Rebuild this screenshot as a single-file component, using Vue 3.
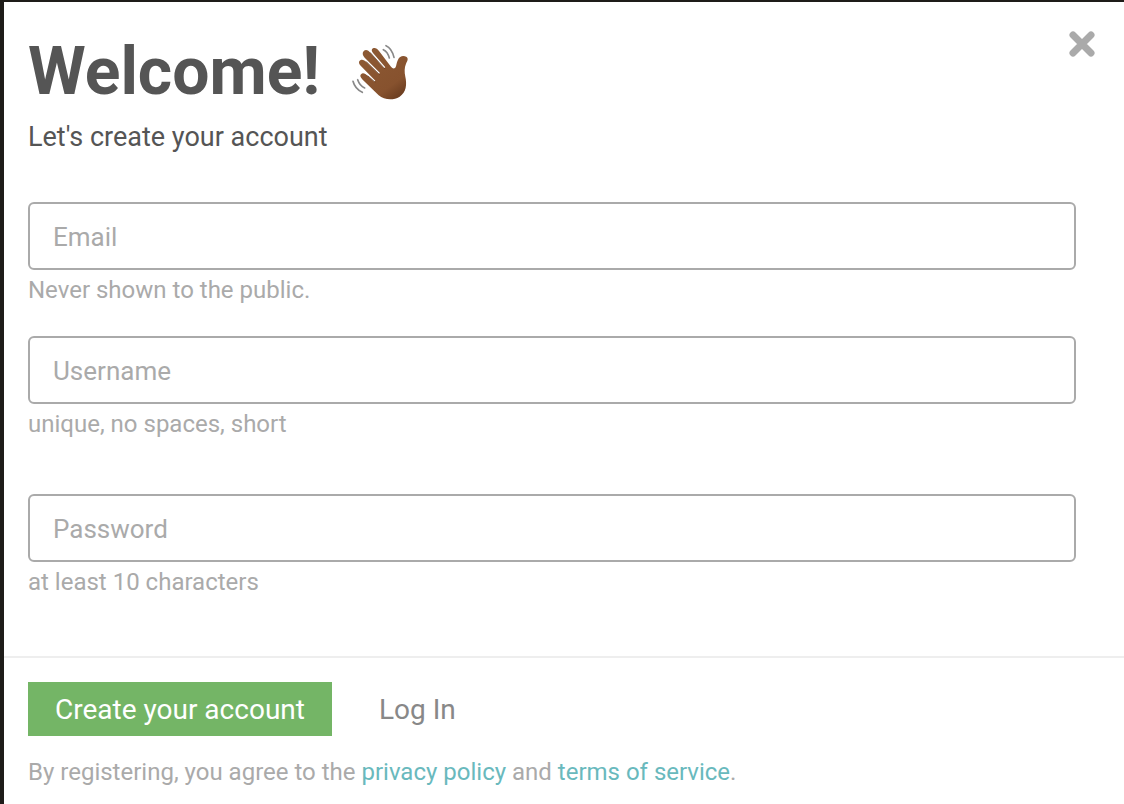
<script setup>
import { reactive, ref } from "vue"

const open = ref(true)

const form = reactive({
  email: "",
  username: "",
  password: ""
})

const fields = [
  { name: "email", type: "email", label: "Email", hint: "Never shown to the public." },
  { name: "username", type: "text", label: "Username", hint: "unique, no spaces, short" },
  { name: "password", type: "password", label: "Password", hint: "at least 10 characters" }
]
</script>

<template>
  <div class="backdrop">
    <form v-if="open" class="modal" @submit.prevent>
      <header class="header">
        <div>
          <h1 class="title">
            Welcome!
            <svg class="wave" viewBox="33 23 174 174" role="img" aria-label="Waving hand">
              <defs>
                <linearGradient id="skin" x1="0" y1="0" x2="0.7" y2="1">
                  <stop offset="0" stop-color="#8d5a34" />
                  <stop offset="0.8" stop-color="#87522e" />
                  <stop offset="1" stop-color="#6f4022" />
                </linearGradient>
              </defs>
              <g fill="none" stroke="#888" stroke-width="5" stroke-linecap="round">
                <path d="M138 31Q155 38 162 66" />
                <path d="M130 43Q143 49 148 68" />
                <path d="M39 138Q45 161 67 171" />
                <path d="M53 133Q59 151 74 158" />
              </g>
              <path
                fill="url(#skin)"
                d="M99 39C105 36 112 40 117 47L153 94Q159 102 165 98C169 95 169 83 174 73C179 62 190 59 200 65C206 70 202 78 198 85C193 97 193 109 196 124C201 147 199 170 179 184C158 197 132 193 116 180L68 133C60 125 59 120 64 116C69 111 77 116 84 122L103 139L106 136L62 91C55 84 56 77 62 74C67 71 74 75 80 81L116 116L120 113L74 67C67 59 66 51 72 46C79 41 86 46 91 52L132 99L136 96L99 53C94 47 94 42 99 39Z"
              />
              <g fill="none" stroke="#5d351c" stroke-width="2" stroke-linecap="round">
                <path d="M80 80L118 117M91 52L134 100M84 122L105 140" />
              </g>
            </svg>
          </h1>
          <p class="subtitle">Let's create your account</p>
        </div>
        <button class="close" type="button" aria-label="Close" @click="open = false">
          <svg viewBox="0 0 28 28">
            <path d="M5 5L23 23M23 5L5 23" />
          </svg>
        </button>
      </header>

      <div class="fields">
        <div v-for="field in fields" :key="field.name" class="field" :class="field.name">
          <input
            :id="field.name"
            v-model="form[field.name]"
            :type="field.type"
            :placeholder="field.label"
            :aria-label="field.label"
            :aria-describedby="field.name + '-hint'"
          />
          <label :id="field.name + '-hint'" :for="field.name" class="hint">{{ field.hint }}</label>
        </div>
      </div>

      <footer class="footer">
        <div class="actions">
          <button class="btn primary" type="submit">Create your account</button>
          <button class="btn" type="button">Log In</button>
        </div>
        <p class="terms">
          By registering, you agree to the <a href="#privacy">privacy policy</a> and
          <a href="#terms">terms of service</a>.
        </p>
      </footer>
    </form>
  </div>
</template>

<style>
body {
  margin: 0;
  background: #1e1c19;
}
</style>

<style scoped>
.backdrop {
  box-sizing: border-box;
  min-height: 100vh;
  display: flex;
  padding: 2px 0 0 4px;
  background: #1e1c19;
  font-family: Roboto, sans-serif;
}

.modal {
  flex: 1;
  background: #fff;
  color: #555;
}

.header {
  display: flex;
  justify-content: space-between;
  align-items: flex-start;
  padding: 28px 24px 0;
}

.title {
  display: flex;
  align-items: center;
  gap: 31px;
  margin: 0;
  font-size: 66px;
  line-height: 84px;
  font-weight: 700;
}

.wave {
  width: 58px;
  height: 58px;
}

.subtitle {
  margin: 4px 0 0;
  font-size: 27px;
  line-height: 38px;
}

.close {
  display: flex;
  margin-right: 4px;
  padding: 0;
  border: none;
  background: none;
  cursor: pointer;
}

.close svg {
  width: 28px;
  height: 28px;
}

.close path {
  fill: none;
  stroke: #aaa;
  stroke-width: 7;
  stroke-linecap: round;
}

.fields {
  padding: 46px 48px 58px 24px;
}

.field {
  display: flex;
  flex-direction: column;
  margin-bottom: 30px;
}

.field.username {
  margin-bottom: 54px;
}

.field.password {
  margin-bottom: 0;
}

.field input {
  box-sizing: border-box;
  width: 100%;
  height: 68px;
  padding: 2px 23px 0;
  border: 2px solid #aaa;
  border-radius: 6px;
  background: #fff;
  color: #555;
  font-family: inherit;
  font-size: 26px;
}

.field input::placeholder {
  color: #aaa;
  opacity: 1;
}

.hint {
  margin-top: 4px;
  color: #aaa;
  font-size: 24px;
  line-height: 32px;
}

.footer {
  padding: 24px 24px 14px;
  border-top: 2px solid #eee;
}

.actions {
  display: flex;
  gap: 20px;
}

.btn {
  height: 54px;
  padding: 0 27px;
  border: none;
  background: none;
  color: #888;
  font-family: inherit;
  font-size: 28px;
  cursor: pointer;
}

.btn.primary {
  background: #74b566;
  color: #fff;
}

.terms {
  margin: 20px 0 0;
  color: #aaa;
  font-size: 24px;
  line-height: 32px;
}

.terms a {
  color: #69b9bd;
  text-decoration: none;
}
</style>
